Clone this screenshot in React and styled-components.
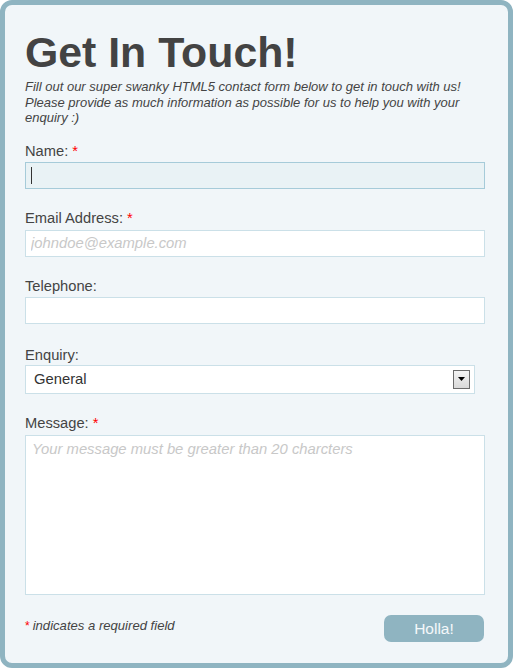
import React from "react";
import styled, { createGlobalStyle } from "styled-components";

const Global = createGlobalStyle`
  html, body { margin: 0; padding: 0; background: #fff; }
  body { font-family: "Liberation Sans", Arial, sans-serif; overflow: hidden; }
  * { box-sizing: border-box; }
`;

const Card = styled.form`
  width: 513px;
  height: 668px;
  border: 5px solid #8fb4c1;
  border-radius: 12px;
  background: #f1f6f9;
  padding: 23.5px 0 0 20px;
  color: #444;
  display: flex;
  flex-direction: column;
`;

const Title = styled.h1`
  margin: 0;
  font-size: 42.8px;
  line-height: 46px;
  font-weight: bold;
  color: #434343;
`;

const Intro = styled.p`
  margin: 4.5px 0 0;
  width: 460px;
  font-size: 13px;
  line-height: 15.5px;
  font-style: italic;
  color: #444;
`;

const Fields = styled.div`
  margin-top: 16px;
  display: flex;
  flex-direction: column;
  gap: 20px;
`;

const Field = styled.div`
  display: flex;
  flex-direction: column;
  gap: ${(p) => p.$gap || 2.5}px;
  margin-top: ${(p) => p.$extra || 0}px;
`;

const Label = styled.label`
  font-size: 14.7px;
  line-height: 18px;
  color: #444;
`;

const Req = styled.span`
  color: #f00;
`;

const TextInput = styled.input`
  width: 460px;
  height: 27px;
  border: 1px solid ${(p) => (p.$focused ? "#a6cbd9" : "#cbe0e8")};
  background: ${(p) => (p.$focused ? "#e9f2f5" : "#fff")};
  padding: 0 5px;
  font-family: "Liberation Sans", Arial, sans-serif;
  font-size: 14.8px;
  color: #444;
  outline: none;
  &::placeholder {
    color: #c8c8c8;
    font-style: italic;
  }
`;

const InputWrap = styled.div`
  position: relative;
  width: 460px;
`;

const Caret = styled.span`
  position: absolute;
  left: 6px;
  top: 5px;
  width: 1px;
  height: 17px;
  background: #333;
`;

const SelectWrap = styled.div`
  position: relative;
  width: 450px;
  height: 29px;
`;

const Select = styled.select`
  appearance: none;
  -webkit-appearance: none;
  width: 450px;
  height: 29px;
  border: 1px solid #cbe0e8;
  background: #fff;
  padding: 0 8px;
  font-family: "Liberation Sans", Arial, sans-serif;
  font-size: 14.8px;
  color: #333;
  outline: none;
  border-radius: 0;
`;

const ArrowBox = styled.span`
  position: absolute;
  right: 5px;
  top: 5px;
  width: 17px;
  height: 19px;
  border: 1px solid #6b6b6b;
  background: linear-gradient(#f4f4f4, #d9d9d9);
  display: flex;
  align-items: center;
  justify-content: center;
  pointer-events: none;
`;

const TextArea = styled.textarea`
  width: 460px;
  height: 160px;
  border: 1px solid #cbe0e8;
  background: #fff;
  padding: 4px 6px;
  font-family: "Liberation Sans", Arial, sans-serif;
  font-size: 14.8px;
  line-height: 18px;
  resize: none;
  outline: none;
  &::placeholder {
    color: #c8c8c8;
    font-style: italic;
  }
`;

const Footer = styled.div`
  margin-top: 20.5px;
  width: 459px;
  display: flex;
  justify-content: space-between;
  align-items: flex-start;
`;

const Note = styled.p`
  margin: 2.5px 0 0;
  font-size: 13.1px;
  line-height: 15px;
  font-style: italic;
  color: #444;
`;

const NoteStar = styled.span`
  color: #f00;
  font-style: normal;
  font-size: 12px;
  margin-right: 3px;
`;

const Button = styled.button`
  width: 100px;
  height: 27px;
  border: none;
  border-radius: 7px;
  background: #8fb4c1;
  color: #f4f8fa;
  font-family: "Liberation Sans", Arial, sans-serif;
  font-size: 15.5px;
  padding: 0;
`;

export default function App() {
  return (
    <>
      <Global />
      <Card onSubmit={(e) => e.preventDefault()}>
        <Title>Get In Touch!</Title>
        <Intro>
          Fill out our super swanky HTML5 contact form below to get in touch
          with us! Please provide as much information as possible for us to
          help you with your enquiry :)
        </Intro>
        <Fields>
          <Field>
            <Label>
              Name: <Req>*</Req>
            </Label>
            <InputWrap>
              <TextInput $focused type="text" />
              <Caret />
            </InputWrap>
          </Field>
          <Field>
            <Label>
              Email Address: <Req>*</Req>
            </Label>
            <TextInput type="email" placeholder="johndoe@example.com" />
          </Field>
          <Field>
            <Label>Telephone:</Label>
            <TextInput type="tel" />
          </Field>
          <Field $extra={1.5} $gap={1}>
            <Label>Enquiry:</Label>
            <SelectWrap>
              <Select defaultValue="General">
                <option>General</option>
                <option>Support</option>
                <option>Sales</option>
              </Select>
              <ArrowBox>
                <svg width="7" height="4" viewBox="0 0 7 4">
                  <path d="M0 0h7L3.5 4z" fill="#000" />
                </svg>
              </ArrowBox>
            </SelectWrap>
          </Field>
          <Field $extra={0.5}>
            <Label>
              Message: <Req>*</Req>
            </Label>
            <TextArea placeholder="Your message must be greater than 20 charcters" />
          </Field>
        </Fields>
        <Footer>
          <Note>
            <NoteStar>*</NoteStar>indicates a required field
          </Note>
          <Button type="submit">Holla!</Button>
        </Footer>
      </Card>
    </>
  );
}
